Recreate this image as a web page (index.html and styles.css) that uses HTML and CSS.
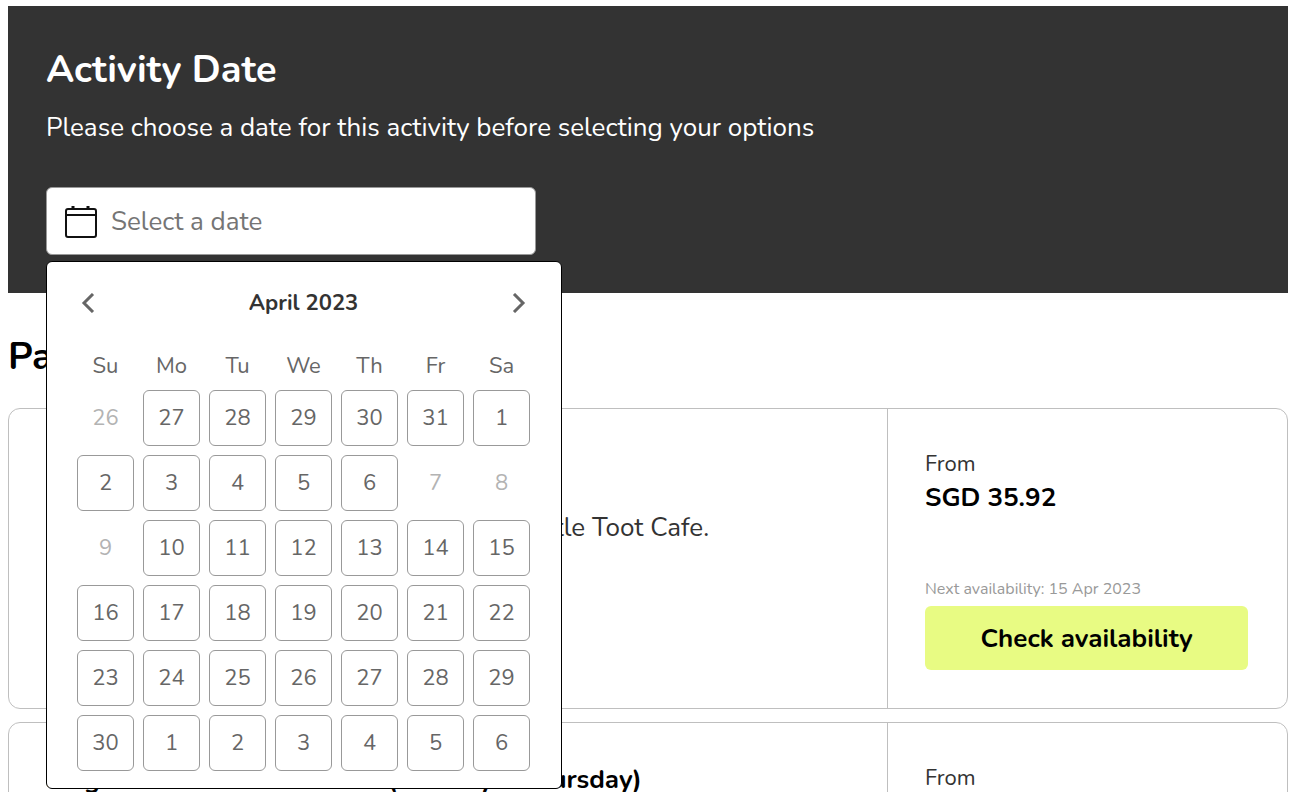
FILE: index.html
```html
<!DOCTYPE html>
<html lang="en">
<head>
  <meta charset="UTF-8">
  <meta name="viewport" content="width=device-width, initial-scale=1">
  <title>Activity Date</title>
  <link rel="stylesheet" href="styles.css">
</head>
<body>
  <!-- Date banner -->
  <section class="banner">
    <h1>Activity Date</h1>
    <p>Please choose a date for this activity before selecting your options</p>

    <div class="date-picker">
      <label class="date-field" for="activityDate">
        <svg class="date-icon" viewBox="0 0 34 34" width="34" height="34" fill="none" stroke="#111" stroke-width="2" aria-hidden="true">
          <rect x="2" y="5" width="30" height="28" rx="2"/>
          <path d="M2 11h30"/>
          <path d="M9 2v4M24 2v4" stroke-width="3"/>
        </svg>
        <input type="text" id="activityDate" placeholder="Select a date" aria-label="Select a date">
      </label>

      <!-- Calendar popup -->
      <div class="calendar">
        <div class="calendar-head">
          <button type="button" class="nav" aria-label="Previous month">
            <svg viewBox="0 0 14 20" width="14" height="20" fill="none" stroke="#666" stroke-width="3"><path d="M12 1L3 10l9 9"/></svg>
          </button>
          <h2>April 2023</h2>
          <button type="button" class="nav" aria-label="Next month">
            <svg viewBox="0 0 14 20" width="14" height="20" fill="none" stroke="#666" stroke-width="3"><path d="M2 1l9 9-9 9"/></svg>
          </button>
        </div>
        <table>
          <thead>
            <tr><th>Su</th><th>Mo</th><th>Tu</th><th>We</th><th>Th</th><th>Fr</th><th>Sa</th></tr>
          </thead>
          <tbody>
            <tr>
              <td><button type="button" disabled>26</button></td>
              <td><button type="button">27</button></td>
              <td><button type="button">28</button></td>
              <td><button type="button">29</button></td>
              <td><button type="button">30</button></td>
              <td><button type="button">31</button></td>
              <td><button type="button">1</button></td>
            </tr>
            <tr>
              <td><button type="button">2</button></td>
              <td><button type="button">3</button></td>
              <td><button type="button">4</button></td>
              <td><button type="button">5</button></td>
              <td><button type="button">6</button></td>
              <td><button type="button" disabled>7</button></td>
              <td><button type="button" disabled>8</button></td>
            </tr>
            <tr>
              <td><button type="button" disabled>9</button></td>
              <td><button type="button">10</button></td>
              <td><button type="button">11</button></td>
              <td><button type="button">12</button></td>
              <td><button type="button">13</button></td>
              <td><button type="button">14</button></td>
              <td><button type="button">15</button></td>
            </tr>
            <tr>
              <td><button type="button">16</button></td>
              <td><button type="button">17</button></td>
              <td><button type="button">18</button></td>
              <td><button type="button">19</button></td>
              <td><button type="button">20</button></td>
              <td><button type="button">21</button></td>
              <td><button type="button">22</button></td>
            </tr>
            <tr>
              <td><button type="button">23</button></td>
              <td><button type="button">24</button></td>
              <td><button type="button">25</button></td>
              <td><button type="button">26</button></td>
              <td><button type="button">27</button></td>
              <td><button type="button">28</button></td>
              <td><button type="button">29</button></td>
            </tr>
            <tr>
              <td><button type="button">30</button></td>
              <td><button type="button">1</button></td>
              <td><button type="button">2</button></td>
              <td><button type="button">3</button></td>
              <td><button type="button">4</button></td>
              <td><button type="button">5</button></td>
              <td><button type="button">6</button></td>
            </tr>
          </tbody>
        </table>
      </div>
    </div>
  </section>

  <!-- Packages -->
  <main>
    <h2 class="section-title">Packages</h2>

    <article class="package">
      <div class="package-info">
        <h3>Meal Combo</h3>
        <p>Includes admission and a set meal at the Little Toot Cafe.</p>
      </div>
      <div class="package-price">
        <span class="from">From</span>
        <strong>SGD 35.92</strong>
        <span class="next">Next availability: 15 Apr 2023</span>
        <button type="button" class="check">Check availability</button>
      </div>
    </article>

    <article class="package">
      <div class="package-info">
        <h3>Single Admission Ticket x 1 (Monday - Thursday)</h3>
      </div>
      <div class="package-price">
        <span class="from">From</span>
        <strong>SGD 35.92</strong>
        <span class="next">Next availability: 15 Apr 2023</span>
        <button type="button" class="check">Check availability</button>
      </div>
    </article>
  </main>
</body>
</html>
```
FILE: styles.css
```css
* {
  box-sizing: border-box;
}
html {
  scrollbar-width: none;
}
body {
  margin: 6px 14px 0 8px;
  font-family: Nunito, Lato, sans-serif;
  background: #fff;
  color: #000;
}
h1, h2, h3, p {
  margin: 0;
}
button, input {
  font-family: inherit;
}
button {
  cursor: pointer;
}

/* Banner */
.banner {
  padding: 38px;
  background: #333;
  color: #fff;
}
.banner h1 {
  font-size: 38px;
  line-height: 52px;
}
.banner p {
  margin: 13px 0 41px;
  font-size: 26px;
  line-height: 37px;
}

/* Date picker */
.date-picker {
  position: relative;
}
.date-field {
  display: flex;
  align-items: center;
  gap: 13px;
  max-width: 490px;
  height: 68px;
  padding: 0 18px 0 17px;
  background: #fff;
  border: 1px solid #999;
  border-radius: 6px;
}
.date-icon {
  flex: none;
}
.date-field input {
  flex: 1;
  min-width: 0;
  padding: 0;
  border: none;
  outline: none;
  font-size: 26px;
}
.date-field input::placeholder {
  color: #757575;
}
.calendar {
  position: absolute;
  top: 74px;
  left: 0;
  z-index: 10;
  width: 516px;
  padding: 18px 21px 8px;
  background: #fff;
  border: 1px solid #000;
  border-radius: 6px;
}
.calendar-head {
  display: flex;
  align-items: center;
  justify-content: space-between;
  height: 46px;
  padding: 0 14px 0 13px;
}
.calendar-head h2 {
  color: #333;
  font-size: 22px;
  line-height: 32px;
}
.nav {
  display: flex;
  padding: 0;
  background: none;
  border: none;
}
.calendar table {
  border-spacing: 9px;
  table-layout: fixed;
  width: 471px;
  color: #666;
  font-size: 22px;
}
.calendar th {
  height: 46px;
  padding: 16px 0 0;
  font-weight: normal;
}
.calendar td {
  padding: 0;
}
.calendar td button {
  display: block;
  width: 100%;
  height: 56px;
  padding: 0;
  background: #fff;
  border: 1px solid #999;
  border-radius: 6px;
  color: #666;
  font-size: 22px;
}
.calendar td button:disabled {
  border-color: transparent;
  color: #b3b3b3;
  cursor: default;
}

/* Packages */
.section-title {
  margin: 38px 0 25px;
  font-size: 38px;
  line-height: 52px;
}
.package {
  display: grid;
  grid-template-columns: 1fr 400px;
  min-height: 301px;
  margin-bottom: 13px;
  border: 1px solid #bfbfbf;
  border-radius: 12px;
}
.package-info {
  padding: 37px;
}
.package-info h3 {
  font-size: 26px;
  line-height: 40px;
}
.package-info p {
  margin-top: 22px;
  color: #333;
  font-size: 26px;
  line-height: 40px;
}
.package-price {
  display: flex;
  flex-direction: column;
  padding: 38px 39px 38px 37px;
  border-left: 1px solid #bfbfbf;
}
.from {
  color: #333;
  font-size: 22px;
  line-height: 34px;
}
.package-price strong {
  font-size: 26px;
  line-height: 34px;
}
.next {
  margin: auto 0 5px;
  color: #999;
  font-size: 16px;
  line-height: 24px;
}
.check {
  height: 64px;
  background: #e8fb83;
  border: none;
  border-radius: 6px;
  color: #000;
  font-size: 26px;
  font-weight: bold;
}
```
